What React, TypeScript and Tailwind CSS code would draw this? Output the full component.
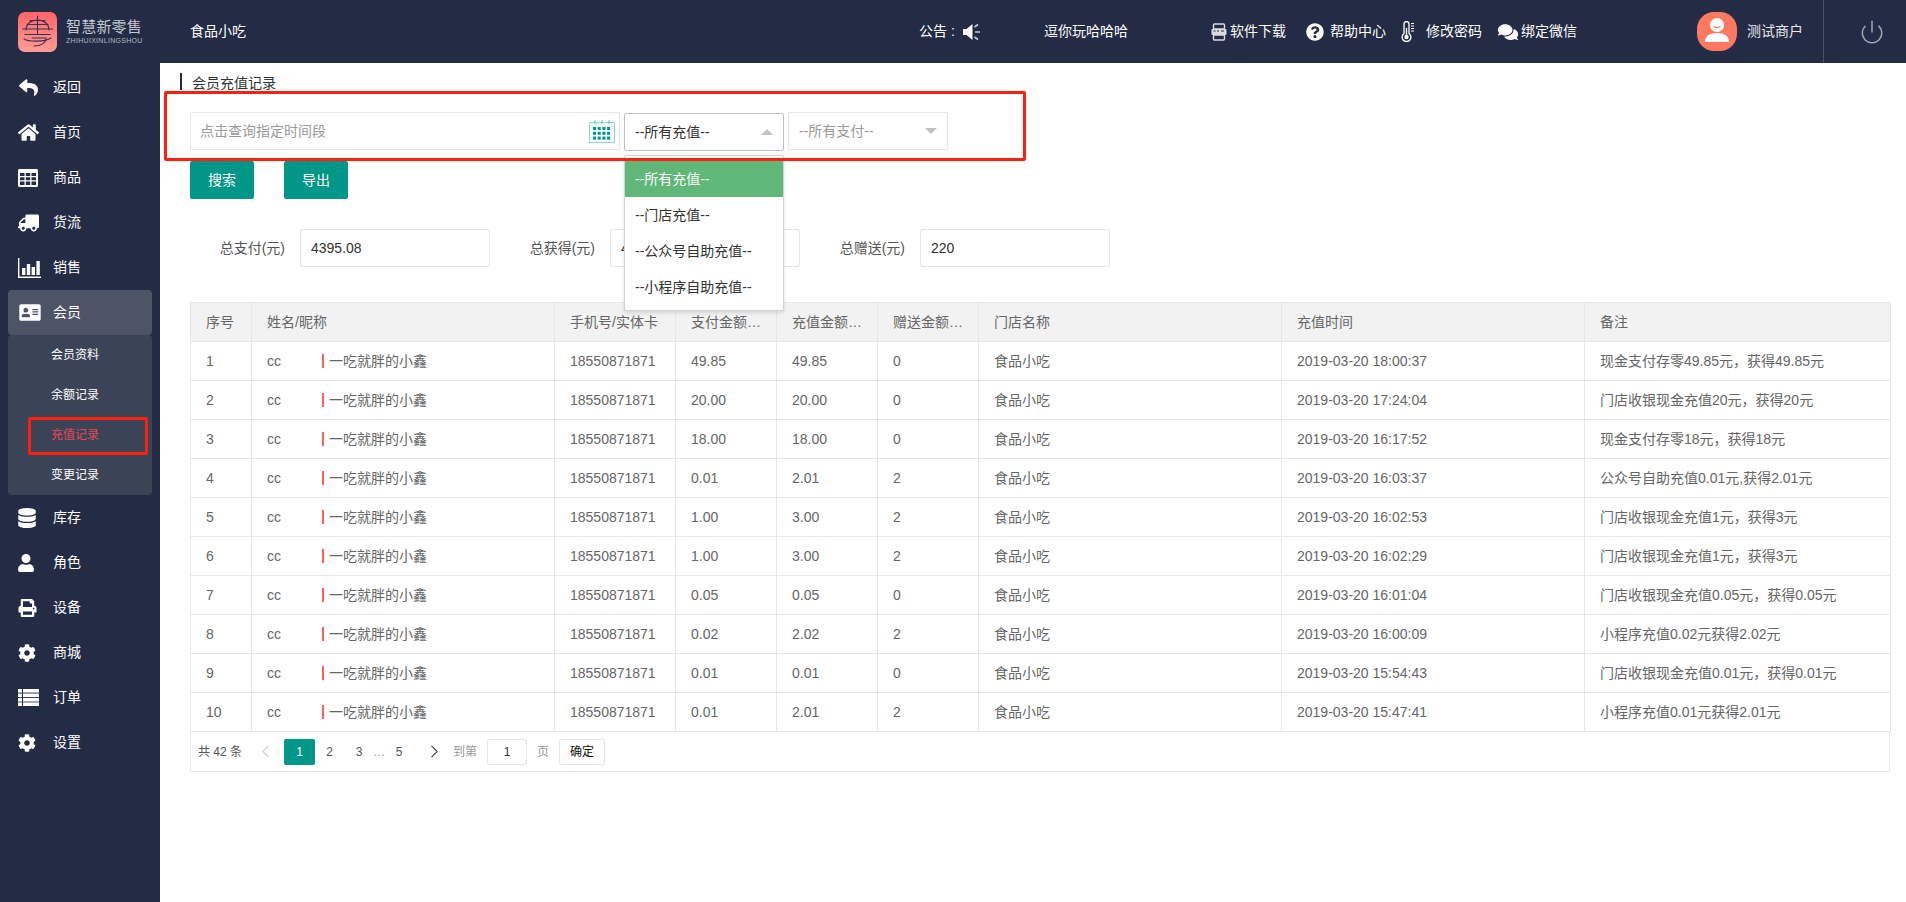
import React from "react";
import {
  FaReply,
  FaHome,
  FaTruck,
  FaAddressCard,
  FaDatabase,
  FaUser,
  FaPrint,
  FaCog,
  FaQuestionCircle,
  FaComments,
} from "react-icons/fa";
import { ChevronLeft, ChevronRight, Power } from "lucide-react";

const rows = [
  ["1", "49.85", "49.85", "0", "2019-03-20 18:00:37", "现金支付存零49.85元，获得49.85元"],
  ["2", "20.00", "20.00", "0", "2019-03-20 17:24:04", "门店收银现金充值20元，获得20元"],
  ["3", "18.00", "18.00", "0", "2019-03-20 16:17:52", "现金支付存零18元，获得18元"],
  ["4", "0.01", "2.01", "2", "2019-03-20 16:03:37", "公众号自助充值0.01元,获得2.01元"],
  ["5", "1.00", "3.00", "2", "2019-03-20 16:02:53", "门店收银现金充值1元，获得3元"],
  ["6", "1.00", "3.00", "2", "2019-03-20 16:02:29", "门店收银现金充值1元，获得3元"],
  ["7", "0.05", "0.05", "0", "2019-03-20 16:01:04", "门店收银现金充值0.05元，获得0.05元"],
  ["8", "0.02", "2.02", "2", "2019-03-20 16:00:09", "小程序充值0.02元获得2.02元"],
  ["9", "0.01", "0.01", "0", "2019-03-20 15:54:43", "门店收银现金充值0.01元，获得0.01元"],
  ["10", "0.01", "2.01", "2", "2019-03-20 15:47:41", "小程序充值0.01元获得2.01元"],
];

const headers = ["序号", "姓名/昵称", "手机号/实体卡", "支付金额(元)", "充值金额(元)", "赠送金额(元)", "门店名称", "充值时间", "备注"];
const colWidths = ["w-[61px]", "w-[303px]", "w-[121px]", "w-[101px]", "w-[101px]", "w-[101px]", "w-[303px]", "w-[303px]", "w-[306px]"];

function GridIcon() {
  return (
    <svg width="20" height="18" viewBox="0 0 20 18" fill="#fff">
      <path d="M1.5 0h17A1.5 1.5 0 0 1 20 1.5v15a1.5 1.5 0 0 1-1.5 1.5h-17A1.5 1.5 0 0 1 0 16.5v-15A1.5 1.5 0 0 1 1.5 0zM2 4v3h4.5V4zm5.8 0v3h4.4V4zm5.7 0v3H18V4zM2 8.2v3h4.5v-3zm5.8 0v3h4.4v-3zm5.7 0v3H18v-3zM2 12.4V16h4.5v-3.6zm5.8 0V16h4.4v-3.6zm5.7 0V16H18v-3.6z" fillRule="evenodd" />
    </svg>
  );
}

function BarsIcon() {
  return (
    <svg width="23" height="20" viewBox="0 0 23 20" fill="#fff">
      <path d="M0 0h1.4v18.4H23V20H0z" />
      <rect x="4" y="10" width="3.4" height="7" />
      <rect x="8.8" y="6" width="3.4" height="11" />
      <rect x="13.6" y="9" width="3.4" height="8" />
      <rect x="18.4" y="3" width="3.4" height="14" />
    </svg>
  );
}

function ListIcon() {
  return (
    <svg width="21" height="17" viewBox="0 0 21 17" fill="#fff">
      <rect x="0" y="0" width="4" height="3.6" />
      <rect x="5" y="0" width="16" height="3.6" />
      <rect x="0" y="4.5" width="4" height="3.6" />
      <rect x="5" y="4.5" width="16" height="3.6" />
      <rect x="0" y="9" width="4" height="3.6" />
      <rect x="5" y="9" width="16" height="3.6" />
      <rect x="0" y="13.4" width="4" height="3.6" />
      <rect x="5" y="13.4" width="16" height="3.6" />
    </svg>
  );
}

const topNav = [
  { label: "返回", icon: <FaReply className="w-[21px] h-[19px]" /> },
  { label: "首页", icon: <FaHome className="w-[21px] h-[19px]" /> },
  { label: "商品", icon: <GridIcon /> },
  { label: "货流", icon: <FaTruck className="w-[21px] h-[18px] -scale-x-100" /> },
  { label: "销售", icon: <BarsIcon /> },
];
const bottomNav = [
  { label: "库存", icon: <FaDatabase className="w-[18px] h-[20px]" /> },
  { label: "角色", icon: <FaUser className="w-[16px] h-[18px]" /> },
  { label: "设备", icon: <FaPrint className="w-[19px] h-[18px]" /> },
  { label: "商城", icon: <FaCog className="w-[18px] h-[18px]" /> },
  { label: "订单", icon: <ListIcon /> },
  { label: "设置", icon: <FaCog className="w-[18px] h-[18px]" /> },
];

function NavItem({ label, icon, active }: { label: string; icon: React.ReactNode; active?: boolean }) {
  return (
    <div className={`mx-2 flex h-[45px] items-center pl-[10px] text-[14px] text-white ${active ? "rounded-[4px] bg-[#4d5467]" : ""}`}>
      <span className="flex w-[35px] items-center">{icon}</span>
      <span>{label}</span>
    </div>
  );
}

function Logo() {
  return (
    <svg width="39" height="40" viewBox="0 0 39 40" className="shrink-0">
      <defs>
        <linearGradient id="lg" x1="0" y1="0" x2="0" y2="1">
          <stop offset="0" stopColor="#ff6469" />
          <stop offset="1" stopColor="#ff9d94" />
        </linearGradient>
      </defs>
      <rect width="39" height="40" rx="7" fill="url(#lg)" />
      <g fill="none" stroke="#39324a" strokeWidth="1.1" strokeLinecap="round">
        <path d="M8 18c0-6 5-10 11.5-10S31 12 31 18" />
        <path d="M12 8.5h15" />
        <path d="M4.5 17h30" />
        <path d="M9 12.5h21" />
        <path d="M19.5 4v18" />
        <path d="M7 22.5h25" />
        <path d="M6 27c5 3 21 3 27-1" />
        <path d="M14 26h14c0 5-5 8-12 8" />
      </g>
    </svg>
  );
}

function Speaker() {
  return (
    <svg width="19" height="18" viewBox="0 0 19 18" className="ml-[5px]">
      <path d="M1 6h3.5L10.5 1v16l-6-5H1z" fill="#fff" />
      <path d="M12.5 4 16 1.5M13 9h5M12.5 14l3.5 2.5" stroke="#c9ccd4" strokeWidth="1.6" fill="none" />
    </svg>
  );
}

function SoftIcon() {
  return (
    <svg width="16" height="18" viewBox="0 0 16 18" className="mr-[3px]">
      <rect x="2.5" y="1" width="11" height="5" rx="1" fill="none" stroke="#d9dbe0" strokeWidth="1.4" />
      <rect x="0.5" y="6" width="15" height="6" rx="1" fill="#d9dbe0" />
      <path d="M2.5 8h2M6 8h2M10 8h3" stroke="#232b45" strokeWidth="1.2" />
      <rect x="2.5" y="12" width="11" height="5" rx="1" fill="none" stroke="#d9dbe0" strokeWidth="1.4" />
    </svg>
  );
}

function Thermo() {
  return (
    <svg width="13" height="21" viewBox="0 0 13 21" className="mr-[12px]">
      <path d="M3 3a2.5 2.5 0 0 1 5 0v9.5a4.4 4.4 0 1 1-5 0z" fill="#232b45" stroke="#fff" strokeWidth="1.3" />
      <circle cx="5.5" cy="16" r="2.2" fill="#fff" />
      <path d="M5.5 7v8" stroke="#fff" strokeWidth="1.4" />
      <path d="M10 2.5h3M10 5h3M10 7.5h3M10 10h3" stroke="#fff" strokeWidth="1.1" />
    </svg>
  );
}

function CalendarIcon() {
  const dots = [];
  for (let r = 0; r < 3; r++) {
    for (let c = 0; c < 4; c++) {
      dots.push(<rect key={`${r}-${c}`} x={4 + c * 4.7} y={7 + r * 4.8} width="3" height="3" fill="#009688" />);
    }
  }
  return (
    <svg width="26" height="23" viewBox="0 0 26 23" className="shrink-0">
      <rect x="0.5" y="2.5" width="25" height="20" fill="#f3fbfa" stroke="#93d6cf" />
      <path d="M6 0v4M13 0v4M20 0v4" stroke="#5fbcb2" strokeWidth="1" />
      {dots}
    </svg>
  );
}

function Avatar() {
  return (
    <svg width="40" height="39" viewBox="0 0 40 39" className="shrink-0">
      <rect width="40" height="39" rx="17" fill="#ff7860" />
      <circle cx="20" cy="13" r="7" fill="#fff" />
      <path d="M16.5 14c1.5 2.2 5.5 2.2 7 0" stroke="#ff7860" strokeWidth="1.2" fill="none" />
      <path d="M8 30c0-6 5-9 12-9s12 3 12 9z" fill="#fff" />
    </svg>
  );
}

function Field({ label, value }: { label: string; value: string }) {
  return (
    <div className="flex h-[38px] items-center">
      <label className="w-[110px] pr-[15px] text-right text-[14px] text-[#555]">{label}</label>
      <input
        readOnly
        value={value}
        className="h-[38px] w-[190px] rounded-[2px] border border-[#e6e6e6] bg-white pl-[10px] text-[14px] text-[#333] outline-none"
      />
    </div>
  );
}

export default function App() {
  return (
    <div className="relative flex h-[902px] w-full flex-col overflow-hidden bg-white [font-family:'Liberation_Sans','Noto_Sans_CJK_SC',sans-serif]">
      <header className="flex h-[63px] shrink-0 items-center bg-[#232b45] text-[14px] text-white">
        <div className="flex w-[190px] shrink-0 items-center pl-[18px]">
          <Logo />
          <div className="ml-[9px] flex flex-col">
            <span className="text-[15px] leading-[16px] tracking-[0.2px] text-[#c4c8d0]">智慧新零售</span>
            <span className="mt-[2px] text-[7px] leading-[8px] tracking-[0.3px] text-[#b4b9c3]">ZHIHUIXINLINGSHOU</span>
          </div>
        </div>
        <span className="w-[56px]">食品小吃</span>
        <span className="ml-[673px] w-[38px] whitespace-nowrap">公告 :</span>
        <Speaker />
        <span className="ml-[63px] w-[84px]">逗你玩哈哈哈</span>
        <span className="ml-[83px] flex items-center">
          <SoftIcon />
          软件下载
        </span>
        <span className="ml-[20px] flex items-center">
          <FaQuestionCircle className="mr-[6px] h-[18px] w-[18px]" />
          帮助中心
        </span>
        <span className="ml-[15px] flex items-center">
          <Thermo />
          修改密码
        </span>
        <span className="ml-[15px] flex items-center">
          <FaComments className="mr-[2px] h-[18px] w-[22px]" />
          绑定微信
        </span>
        <span className="ml-[120px] flex items-center">
          <Avatar />
          <span className="ml-[10px] text-[#e8e9ec]">测试商户</span>
        </span>
        <span className="ml-[20px] flex h-full flex-1 items-center justify-center border-l border-[#4b5265]">
          <Power className="ml-[14px] h-[26px] w-[26px] text-[#a3a6ae]" strokeWidth={1.4} />
        </span>
      </header>

      <div className="flex min-h-0 flex-1">
        <aside className="w-[160px] shrink-0 bg-[#232b45] pt-[2px]">
          {topNav.map((n) => (
            <NavItem key={n.label} {...n} />
          ))}
          <NavItem label="会员" icon={<FaAddressCard className="h-[19px] w-[24px]" />} active />
          <div className="mx-2 rounded-[4px] bg-[#3b4356] text-[12px] text-white">
            <div className="flex h-[40px] items-center pl-[43px]">会员资料</div>
            <div className="flex h-[40px] items-center pl-[43px]">余额记录</div>
            <div className="relative flex h-[40px] items-center pl-[43px] text-[#e8475a]">
              充值记录
              <span className="absolute left-[20px] top-[2px] h-[38px] w-[120px] rounded-[2px] border-[3px] border-[#ff1f10]" />
            </div>
            <div className="flex h-[40px] items-center pl-[43px]">变更记录</div>
          </div>
          {bottomNav.map((n) => (
            <NavItem key={n.label} {...n} />
          ))}
        </aside>

        <main className="min-w-0 flex-1 pl-[30px] pr-[16px] pt-[10px]">
          <div className="-ml-[10px] flex h-[17px] items-center border-l-2 border-[#232b45] pl-[10px] pt-[3px] text-[14px] text-[#333]">
            会员充值记录
          </div>

          <div className="mt-[22px] flex items-start gap-[4px]">
            <div className="flex h-[38px] w-[430px] items-center justify-between rounded-[2px] border border-[#e6e6e6] pl-[9px] pr-[4px]">
              <input
                readOnly
                placeholder="点击查询指定时间段"
                className="w-[300px] bg-transparent text-[14px] text-[#333] outline-none placeholder:text-[#999]"
              />
              <CalendarIcon />
            </div>
            <div className="relative mt-[1px] flex h-[38px] w-[160px] items-center rounded-[2px] border border-[#c2c2c2] pl-[10px] pr-[10px] text-[14px] text-[#333]">
              --所有充值--
              <span className="ml-auto h-0 w-0 border-x-[6px] border-b-[6px] border-x-transparent border-b-[#c2c2c2]" />
              <div className="absolute left-[-1px] top-[41px] z-10 w-[160px] rounded-[2px] border border-[#d2d2d2] bg-white py-[5px] shadow-[0_2px_4px_rgba(0,0,0,0.12)]">
                <div className="flex h-[36px] items-center bg-[#5fb878] pl-[10px] text-white">--所有充值--</div>
                <div className="flex h-[36px] items-center pl-[10px]">--门店充值--</div>
                <div className="flex h-[36px] items-center pl-[10px]">--公众号自助充值--</div>
                <div className="flex h-[36px] items-center pl-[10px]">--小程序自助充值--</div>
              </div>
            </div>
            <div className="flex h-[38px] w-[160px] items-center rounded-[2px] border border-[#e6e6e6] pl-[10px] pr-[10px] text-[14px] text-[#999]">
              --所有支付--
              <span className="ml-auto h-0 w-0 border-x-[6px] border-t-[6px] border-x-transparent border-t-[#c2c2c2]" />
            </div>
          </div>

          <div className="mt-[10px] flex gap-[30px]">
            <button className="h-[38px] w-[64px] rounded-[2px] bg-[#009688] text-[14px] text-white">搜索</button>
            <button className="h-[38px] w-[64px] rounded-[2px] bg-[#009688] text-[14px] text-white">导出</button>
          </div>

          <div className="mt-[30px] flex gap-[10px]">
            <Field label="总支付(元)" value="4395.08" />
            <Field label="总获得(元)" value="4615.08" />
            <Field label="总赠送(元)" value="220" />
          </div>

          <table className="mt-[35px] w-[1700px] table-fixed border-collapse text-[14px] text-[#666]">
            <colgroup>
              {colWidths.map((w, i) => (
                <col key={i} className={w} />
              ))}
            </colgroup>
            <thead>
              <tr className="bg-[#f2f2f2]">
                {headers.map((h) => (
                  <th key={h} className="h-[39px] overflow-hidden text-ellipsis whitespace-nowrap border border-[#e6e6e6] px-[15px] text-left font-normal">
                    {h}
                  </th>
                ))}
              </tr>
            </thead>
            <tbody>
              {rows.map((r) => (
                <tr key={r[0]}>
                  <td className="h-[39px] border border-[#e6e6e6] px-[15px]">{r[0]}</td>
                  <td className="h-[39px] border border-[#e6e6e6] px-[15px]">
                    <span className="flex items-center">
                      <span className="w-[55px]">cc</span>
                      <span className="mr-[5px] h-[14px] w-[2px] bg-[#ff5e5e]" />
                      一吃就胖的小鑫
                    </span>
                  </td>
                  <td className="h-[39px] border border-[#e6e6e6] px-[15px]">18550871871</td>
                  <td className="h-[39px] border border-[#e6e6e6] px-[15px]">{r[1]}</td>
                  <td className="h-[39px] border border-[#e6e6e6] px-[15px]">{r[2]}</td>
                  <td className="h-[39px] border border-[#e6e6e6] px-[15px]">{r[3]}</td>
                  <td className="h-[39px] border border-[#e6e6e6] px-[15px]">食品小吃</td>
                  <td className="h-[39px] border border-[#e6e6e6] px-[15px]">{r[4]}</td>
                  <td className="h-[39px] border border-[#e6e6e6] px-[15px]">{r[5]}</td>
                </tr>
              ))}
            </tbody>
          </table>

          <div className="flex h-[40px] w-[1700px] items-center border-x border-b border-[#e6e6e6] text-[12px] text-[#555]">
            <span className="ml-[7px] w-[52px] whitespace-nowrap text-[#555]">共 42 条</span>
            <span className="flex w-[31px] justify-center">
              <ChevronLeft className="h-[21px] w-[21px] text-[#d2d2d2]" strokeWidth={1.4} />
            </span>
            <span className="ml-[3px] flex h-[26px] w-[31px] items-center justify-center rounded-[2px] bg-[#009688] text-white">1</span>
            <span className="flex w-[29px] justify-center">2</span>
            <span className="flex w-[30px] justify-center">3</span>
            <span className="flex w-[10px] justify-center text-[#999]">…</span>
            <span className="flex w-[30px] justify-center">5</span>
            <span className="ml-[5px] flex w-[30px] justify-center">
              <ChevronRight className="h-[21px] w-[21px] text-[#555]" strokeWidth={1.4} />
            </span>
            <span className="ml-[4px] w-[24px] text-[#999]">到第</span>
            <span className="ml-[10px] flex h-[26px] w-[40px] items-center justify-center rounded-[2px] border border-[#e6e6e6] text-[#333]">1</span>
            <span className="ml-[10px] w-[12px] text-[#999]">页</span>
            <span className="ml-[10px] flex h-[26px] w-[46px] items-center justify-center rounded-[2px] border border-[#e6e6e6] text-[#111]">确定</span>
          </div>
        </main>
      </div>

      <div className="pointer-events-none absolute left-[164px] top-[91px] z-20 h-[70px] w-[862px] rounded-[2px] border-[3px] border-[#ff1f10]" />
    </div>
  );
}
